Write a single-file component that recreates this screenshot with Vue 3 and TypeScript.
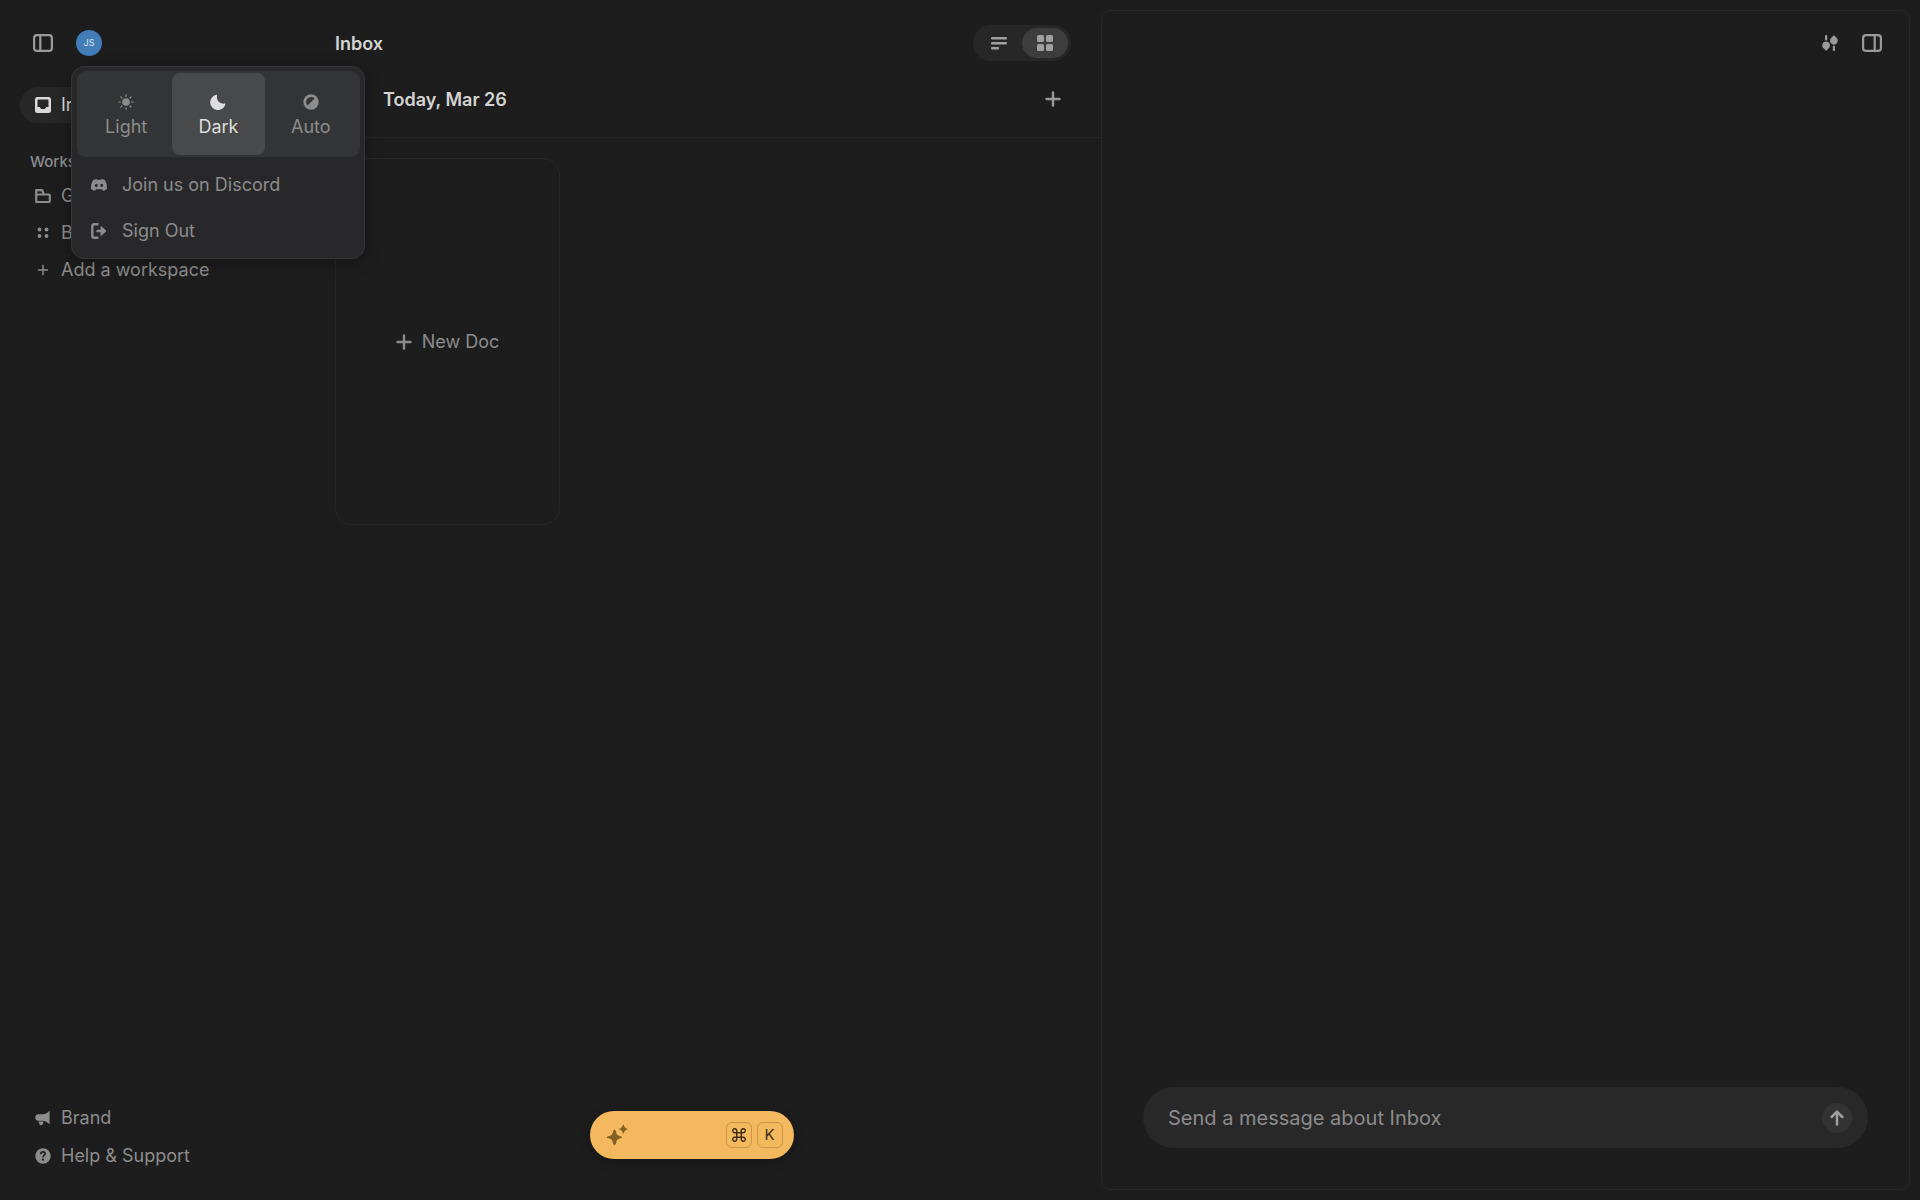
<script setup lang="ts">
import { ref } from 'vue'

type Theme = 'Light' | 'Dark' | 'Auto'
type View = 'list' | 'grid'

const themes: Theme[] = ['Light', 'Dark', 'Auto']
const theme = ref<Theme>('Dark')
const view = ref<View>('grid')
const message = ref('')
</script>

<template>
  <div class="app">
    <aside class="sidebar">
      <div class="account-bar">
        <button class="icon-button" type="button" aria-label="Toggle sidebar">
          <svg width="20" height="18" viewBox="0 0 20 18" fill="none" stroke="currentColor" stroke-width="2.200">
            <rect x="1.100" y="1.100" width="17.800" height="15.800" rx="3" />
            <path d="M7.300 1v16" />
          </svg>
        </button>
        <div class="account">
          <button class="avatar" type="button" aria-haspopup="menu" aria-expanded="true">JS</button>
          <div class="popover">
            <div class="themes">
              <button
                v-for="name in themes"
                :key="name"
                type="button"
                class="theme"
                :class="{ active: theme === name }"
                :aria-pressed="theme === name"
                @click="theme = name"
              >
                <svg v-if="name === 'Light'" width="16" height="16" viewBox="0 0 16 16" fill="currentColor">
                  <circle cx="8" cy="8" r="3.8" />
                  <path
                    d="M8 .7v1.8M8 13.500v1.800M.7 8h1.800M13.500 8h1.800M2.800 2.800l1.200 1.200M12 12l1.200 1.200M2.800 13.200l1.200-1.200M12 4l1.200-1.200"
                    stroke="currentColor"
                    stroke-width="1.200"
                    stroke-linecap="round"
                  />
                </svg>
                <svg v-else-if="name === 'Dark'" width="16" height="16" viewBox="0 0 16 16" fill="currentColor">
                  <path d="M6.300.8a.5.5 0 0 1 .7.600C6.300 6.800 9.400 10 14.700 9.600c.6 0 .8.300.6.800A7.700 7.700 0 1 1 6.300.8z" />
                </svg>
                <svg v-else width="16" height="16" viewBox="0 0 16 16">
                  <circle cx="8" cy="8" r="7.700" fill="currentColor" />
                  <path d="M11.600 4.400A5.100 5.100 0 0 0 4.400 11.600z" fill="#333435" />
                </svg>
                <span>{{ name }}</span>
              </button>
            </div>
            <a class="menu-item" href="#discord">
              <svg width="16" height="16" viewBox="0 0 16 16" fill="currentColor">
                <path
                  fill-rule="evenodd"
                  d="M5.500 1.900 6.100 2.800Q8 2.500 9.900 2.800l.6-.9c1.300.2 2.300.5 3.300 1 1.700 2.700 2.400 5.500 2.100 9-1.200.9-2.400 1.500-3.900 1.900l-1-1.500H5l-1 1.500C2.500 13.400 1.300 12.800.1 11.900-.2 8.400.5 5.600 2.200 2.900c1-.5 2-.8 3.300-1zM5.300 6.700a1.500 1.600 0 1 0 0 3.200A1.500 1.600 0 0 0 5.300 6.700zm5.400 0a1.500 1.600 0 1 0 0 3.200 1.500 1.600 0 0 0 0-3.200z"
                />
              </svg>
              Join us on Discord
            </a>
            <button class="menu-item" type="button">
              <svg width="16" height="16" viewBox="0 0 16 16" fill="none" stroke="currentColor">
                <path d="M7.500 1.300H3A1.700 1.700 0 0 0 1.300 3v10A1.700 1.700 0 0 0 3 14.700h4.500M5.500 8h5" stroke-width="2.400" />
                <path d="M10 3.500 15 8l-5 4.500z" fill="currentColor" stroke-width="1" stroke-linejoin="round" />
              </svg>
              Sign Out
            </button>
          </div>
        </div>
      </div>

      <nav class="nav">
        <a class="nav-item current" href="#inbox">
          <svg width="16" height="16" viewBox="0 0 16 16" fill="currentColor">
            <path
              fill-rule="evenodd"
              d="M2.500 0h11A2.500 2.500 0 0 1 16 2.500v11a2.500 2.500 0 0 1-2.500 2.500h-11A2.500 2.500 0 0 1 0 13.500v-11A2.500 2.500 0 0 1 2.500 0zM3 2.500a.5.5 0 0 0-.5.500v7h2.300l1.200 2h4l1.200-2h2.300V3a.5.5 0 0 0-.5-.5z"
            />
          </svg>
          Inbox
        </a>
        <h2 class="nav-label">Workspaces</h2>
        <a class="nav-item" href="#g">
          <svg width="16" height="16" viewBox="0 0 16 16" fill="none" stroke="currentColor" stroke-width="2.200" stroke-linejoin="round">
            <path d="M1.200 14V2.200h6l1.600 4.300h5.100q.9 0 .9.900v5.700q0 .9-.9.900zM1.200 6.500h8" />
          </svg>
          G
        </a>
        <a class="nav-item" href="#b">
          <svg width="16" height="16" viewBox="0 0 16 16" fill="currentColor">
            <circle cx="4.500" cy="4.500" r="1.900" />
            <circle cx="11.500" cy="4.500" r="1.900" />
            <circle cx="4.500" cy="11" r="1.900" />
            <circle cx="11.500" cy="11" r="1.900" />
          </svg>
          B
        </a>
        <button class="nav-item" type="button">
          <svg width="16" height="16" viewBox="0 0 16 16" fill="none" stroke="currentColor" stroke-width="1.500" stroke-linecap="round">
            <path d="M8 3.500v9M3.500 8h9" />
          </svg>
          Add a workspace
        </button>
      </nav>

      <nav class="nav nav-bottom">
        <a class="nav-item" href="#brand">
          <svg width="16" height="16" viewBox="0 0 16 16" fill="currentColor">
            <path d="M14.600.6v13.600l-2.100-1.500C10.800 11.500 9 10.800 7 10.800H3.600a3.300 3.300 0 0 1 0-6.600H7c2.300 0 4.100-.7 5.600-1.800z" />
            <path d="M3.400 11.500h4.800v1.800a2.200 2.200 0 0 1-3.600 1.300z" />
          </svg>
          Brand
        </a>
        <a class="nav-item" href="#help">
          <svg width="16" height="16" viewBox="0 0 16 16">
            <circle cx="8" cy="8" r="7.700" fill="currentColor" />
            <path d="M5.800 6.200C5.900 3 10.400 3.400 10.100 6 9.900 7.500 8 7.400 8 9.300" fill="none" stroke="#1d1d1d" stroke-width="1.700" />
            <circle cx="8" cy="11.700" r="1.100" fill="#1d1d1d" />
          </svg>
          Help &amp; Support
        </a>
      </nav>
    </aside>

    <main class="main">
      <header class="main-header">
        <h1>Inbox</h1>
        <div class="view-toggle">
          <button type="button" aria-label="List view" :class="{ active: view === 'list' }" @click="view = 'list'">
            <svg width="16" height="16" viewBox="0 0 16 16" fill="currentColor">
              <rect x="0" y="2" width="16" height="2.500" rx="1" />
              <rect x="0" y="7" width="16" height="2.500" rx="1" />
              <rect x="0" y="12" width="8" height="2.500" rx="1" />
            </svg>
          </button>
          <button type="button" aria-label="Grid view" :class="{ active: view === 'grid' }" @click="view = 'grid'">
            <svg width="16" height="16" viewBox="0 0 16 16" fill="currentColor">
              <rect x="0" y="0" width="7" height="7" rx="1.500" />
              <rect x="9" y="0" width="7" height="7" rx="1.500" />
              <rect x="0" y="9" width="7" height="7" rx="1.500" />
              <rect x="9" y="9" width="7" height="7" rx="1.500" />
            </svg>
          </button>
        </div>
      </header>
      <div class="day">
        <h2>Today, Mar 26</h2>
        <button class="icon-button" type="button" aria-label="Add doc">
          <svg width="16" height="16" viewBox="0 0 16 16" fill="none" stroke="currentColor" stroke-width="2.400" stroke-linecap="round">
            <path d="M8 1.500v13M1.500 8h13" />
          </svg>
        </button>
      </div>
      <div class="docs">
        <button class="new-doc" type="button">
          <svg width="16" height="16" viewBox="0 0 16 16" fill="none" stroke="currentColor" stroke-width="2.400" stroke-linecap="round">
            <path d="M8 1.500v13M1.500 8h13" />
          </svg>
          New Doc
        </button>
      </div>
      <button class="command" type="button" aria-label="Open assistant">
        <svg width="22" height="22" viewBox="0 0 22 22" fill="currentColor">
          <path d="M8.500 5.500Q9.300 5.500 9.800 7 10.600 10.200 11.500 11 12.300 11.700 15.500 12.500 16.800 13.200 15.500 13.900 12.300 14.600 11.500 15.400 10.600 16.300 9.800 20 8.500 22 7.200 20 6.400 16.300 5.500 15.400 4.700 14.600 1.300 13.900 0 13.200 1.300 12.500 4.700 11.700 5.500 11 6.400 10.200 7.200 7 7.700 5.500 8.500 5.500z" />
          <path d="M17.300.3Q18.500 3 19 3.500q.5.500 3 1.600-2.500 1.100-3 1.600-.5.400-1.700 3.300-1.200-2.900-1.700-3.300-.5-.5-3-1.600 2.500-1.100 3-1.600.5-.5 1.700-3.200z" />
        </svg>
        <span class="keys">
          <kbd>
            <svg width="14" height="14" viewBox="0 0 14 14" fill="none" stroke="currentColor" stroke-width="1.400">
              <path d="M4.700 4.700H9.300V9.300H4.700zM4.700 4.700H3A2 2 0 1 1 4.700 3zM9.300 4.700V3A2 2 0 1 1 11 4.700zM9.300 9.300H11A2 2 0 1 1 9.300 11zM4.700 9.300V11A2 2 0 1 1 3 9.300z" />
            </svg>
          </kbd>
          <kbd>K</kbd>
        </span>
      </button>
    </main>

    <section class="chat">
      <div class="chat-panel">
        <div class="chat-tools">
          <button class="icon-button" type="button" aria-label="Chat settings">
            <svg width="16" height="16" viewBox="0 0 16 16" fill="currentColor">
              <rect x="3" y="0" width="2.200" height="5.500" rx="1" />
              <path d="M4.100 6.500a3.900 3.900 0 0 1 2 7.200L4.900 15.200q-.8.700-1.600 0L2.100 13.700a3.900 3.900 0 0 1 2-7.200z" />
              <path d="M11.900 9.500a3.900 3.900 0 0 0 2-7.200L12.700.8q-.8-.7-1.600 0L9.900 2.300a3.900 3.900 0 0 0 2 7.200z" />
              <rect x="10.800" y="10.500" width="2.200" height="5.500" rx="1" />
            </svg>
          </button>
          <button class="icon-button" type="button" aria-label="Toggle chat">
            <svg width="20" height="18" viewBox="0 0 20 18" fill="none" stroke="currentColor" stroke-width="2.200">
              <rect x="1.100" y="1.100" width="17.800" height="15.800" rx="3" />
              <path d="M12.700 1v16" />
            </svg>
          </button>
        </div>
        <form class="composer" @submit.prevent>
          <input v-model="message" type="text" placeholder="Send a message about Inbox" aria-label="Message" />
          <button class="send" type="submit" aria-label="Send">
            <svg width="16" height="16" viewBox="0 0 16 16" fill="none" stroke="currentColor" stroke-width="2.500" stroke-linecap="round" stroke-linejoin="round">
              <path d="M8 14.500V1.800M2.700 7 8 1.700 13.300 7" />
            </svg>
          </button>
        </form>
      </div>
    </section>
  </div>
</template>

<style>
body {
  background: #1d1d1d;
}
</style>

<style scoped>
.app {
  display: grid;
  grid-template-columns: 282px minmax(0, 1fr) minmax(0, 1fr);
  min-height: 100vh;
  background: #1d1d1d;
  color: #8c8c8c;
  font-family: Inter, 'Liberation Sans', sans-serif;
  font-size: 18px;
  line-height: 24px;
}

.app *,
.app {
  box-sizing: border-box;
}

svg {
  display: block;
  flex: none;
}

button,
input {
  margin: 0;
  padding: 0;
  border: 0;
  background: none;
  color: inherit;
  font: inherit;
}

a {
  color: inherit;
  text-decoration: none;
}

h1,
h2 {
  margin: 0;
  color: #d4d4d4;
  font-size: 18px;
  font-weight: 600;
}

.icon-button {
  display: flex;
  color: #9a9a9a;
}

.sidebar {
  display: flex;
  flex-direction: column;
  padding: 25px 20px;
}

.account-bar {
  display: flex;
  align-items: center;
  gap: 23px;
  height: 36px;
  padding-left: 13px;
}

.account {
  position: relative;
}

.avatar {
  display: block;
  width: 26px;
  height: 26px;
  border-radius: 50%;
  background: #427db8;
  color: #dbe6f0;
  font-size: 9px;
  line-height: 26px;
}

.popover {
  position: absolute;
  z-index: 2;
  top: 36px;
  left: -5px;
  width: 294px;
  padding: 4px 4px 4px 5px;
  border: 1px solid #353636;
  border-radius: 13px;
  background: #28282a;
  box-shadow: 0 4px 16px rgba(0, 0, 0, 0.3);
}

.themes {
  display: flex;
  padding: 2px 3px;
  border-radius: 9px;
  background: #333435;
}

.theme {
  display: flex;
  flex: 1;
  flex-direction: column;
  align-items: center;
  gap: 5px;
  height: 82px;
  padding-top: 21px;
  border-radius: 8px;
}

.theme.active {
  background: #48494a;
  color: #dedede;
}

.menu-item {
  display: flex;
  align-items: center;
  gap: 15px;
  width: 100%;
  height: 46px;
  padding-left: 14px;
}

.themes + .menu-item {
  margin-top: 5px;
}

.nav {
  display: flex;
  flex-direction: column;
  gap: 1px;
  margin-top: 26px;
}

.nav-item {
  display: flex;
  align-items: center;
  gap: 10px;
  height: 36px;
  padding-left: 15px;
  border-radius: 18px;
  text-align: left;
}

.nav-item.current {
  background: #272727;
  color: #d8d8d8;
}

.nav-label {
  margin: 26px 0 3px;
  padding-left: 10px;
  color: #8c8c8c;
  font-size: 15px;
  font-weight: 500;
}

.nav-bottom {
  gap: 2px;
  margin-top: auto;
  margin-bottom: 1px;
}

.main {
  display: flex;
  flex-direction: column;
  padding: 25px 0 41px;
}

.main-header {
  display: flex;
  align-items: center;
  justify-content: space-between;
  padding: 0 30px 0 53px;
}

.main h1,
.main h2 {
  padding-top: 2px;
}

.view-toggle {
  display: flex;
  padding: 3px;
  border-radius: 18px;
  background: #272727;
}

.view-toggle button {
  display: flex;
  align-items: center;
  justify-content: center;
  width: 46px;
  height: 30px;
  border-radius: 15px;
  color: #a0a0a0;
}

.view-toggle button.active {
  background: #3d3d3d;
}

.day {
  display: flex;
  align-items: center;
  justify-content: space-between;
  height: 77px;
  padding: 0 40px 0 101px;
  border-bottom: 1px solid #252525;
}

.docs {
  padding: 20px 53px;
}

.new-doc {
  display: flex;
  align-items: center;
  justify-content: center;
  gap: 10px;
  width: 225px;
  height: 367px;
  border: 1px solid #272727;
  border-radius: 17px;
}

.command {
  display: flex;
  align-items: center;
  align-self: center;
  justify-content: space-between;
  width: 204px;
  height: 48px;
  margin-top: auto;
  padding: 0 11px 0 16px;
  border-radius: 24px;
  background: #f4b85e;
  color: #866126;
  box-shadow: 0 4px 12px rgba(0, 0, 0, 0.25);
}

.keys {
  display: flex;
  gap: 5px;
  color: #402e12;
}

kbd {
  display: flex;
  align-items: center;
  justify-content: center;
  width: 26px;
  height: 26px;
  border: 1px solid #c9964c;
  border-radius: 6px;
  font-family: inherit;
  font-size: 15px;
}

.chat {
  display: flex;
  padding: 10px 10px 10px 0;
}

.chat-panel {
  display: flex;
  flex: 1;
  flex-direction: column;
  justify-content: space-between;
  min-width: 0;
  border: 1px solid #272727;
  border-radius: 9px;
}

.chat-tools {
  display: flex;
  align-items: center;
  justify-content: flex-end;
  gap: 24px;
  padding: 23px 27px;
}

.composer {
  display: flex;
  align-items: center;
  height: 61px;
  margin: 0 41px;
  margin-bottom: 41px;
  padding: 0 16px 0 25px;
  border-radius: 31px;
  background: #282828;
}

.composer input {
  flex: 1;
  min-width: 0;
  outline: 0;
  font-size: 20px;
}

.composer input::placeholder {
  color: #8c8c8c;
  opacity: 1;
}

.send {
  display: flex;
  align-items: center;
  justify-content: center;
  width: 30px;
  height: 30px;
  border-radius: 50%;
  background: #333333;
  color: #a0a0a0;
}
</style>
